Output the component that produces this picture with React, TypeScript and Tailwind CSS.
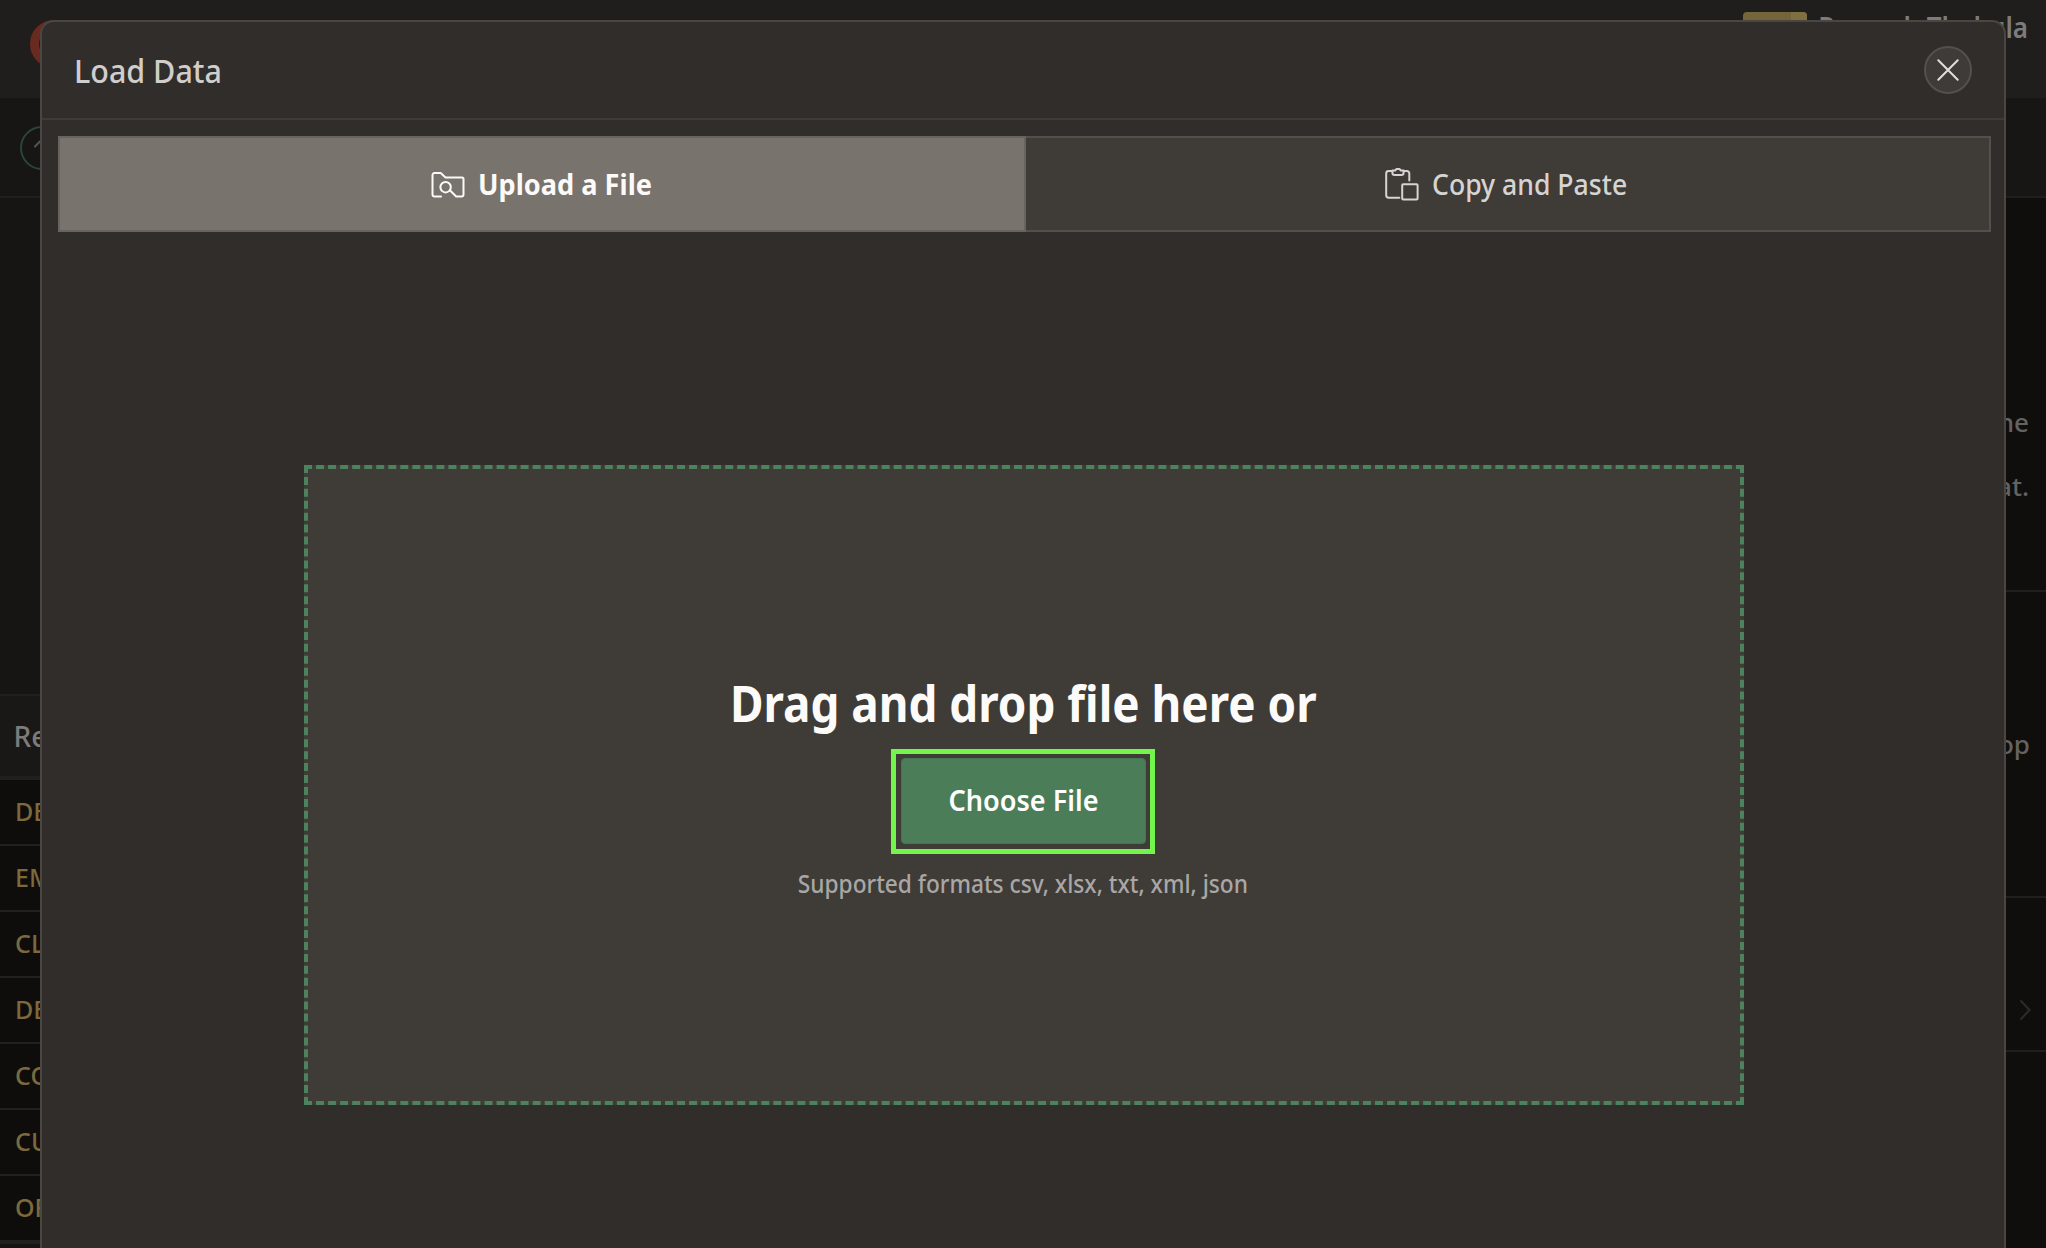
import React from "react";

const tables = ["DE", "EM", "CL", "DE", "CO", "CU", "OR"];

function FolderSearchIcon() {
  return (
    <svg className="mt-px h-[26px] w-[34px] shrink-0" viewBox="0 0 34 26" fill="none" stroke="#fbfaf9" strokeWidth="2" strokeLinecap="round" strokeLinejoin="round">
      <path d="M10 24.5H3.5a2 2 0 0 1-2-2V3a2 2 0 0 1 2-2h6.2l4.8 4.4H31a1.5 1.5 0 0 1 1.5 1.5V22.5a2 2 0 0 1-2 2h-5.3l-6.4-6.3" />
      <circle cx="14.6" cy="15.2" r="5.2" />
    </svg>
  );
}

function PasteIcon() {
  return (
    <svg className="h-[34px] w-[34px] shrink-0" viewBox="0 0 34 34" fill="none" stroke="#d6d4d2" strokeWidth="2" strokeLinecap="round" strokeLinejoin="round">
      <path d="M14.3 30.7H3.6A2.4 2.4 0 0 1 1.2 28.3V6.4A2.4 2.4 0 0 1 3.6 4H7" />
      <path d="M18.5 4h3.4a2.4 2.4 0 0 1 2.4 2.4v7.2" />
      <path d="M7.4 3.6h2.8L11.3 2h3.4l1.1 1.6h2.8v2.2a2.2 2.2 0 0 1-2.2 2.2H9.6a2.2 2.2 0 0 1-2.2-2.2z" />
      <rect x="17.2" y="17.2" width="15.4" height="15.4" rx="1" />
    </svg>
  );
}

function Backdrop() {
  return (
    <div className="flex h-full flex-col">
      <header className="flex h-[98px] shrink-0 justify-between bg-[#1f1e1c] pl-[30px] pr-[18px]">
        <div className="mt-5 h-12 w-[72px] rounded-full border-[9px] border-[#692a20]" />
        <div className="flex items-start">
          <div className="mt-3 flex h-10 w-16 overflow-hidden rounded bg-[#74663a]">
            <div className="ml-auto w-4 bg-[#7f7042]" />
          </div>
          <span className="flex w-[221px] origin-right scale-x-[0.93] justify-end whitespace-nowrap pt-[9px] text-[28px] font-semibold leading-9 text-[#7d7c7b]">
            Ramesh Thakula
          </span>
        </div>
      </header>
      <div className="flex h-[100px] shrink-0 items-center border-b-2 border-[#201f1d] bg-[#171614] pl-5 pt-0.5">
        <svg className="h-11 w-11" viewBox="0 0 44 44" fill="none" strokeWidth="2">
          <circle cx="22" cy="22" r="21" stroke="#284735" />
          <path d="M15 20.5l7-7 7 7" stroke="#555452" strokeLinecap="round" />
        </svg>
      </div>
      <div className="flex flex-1 justify-between">
        <aside className="flex w-14 flex-col bg-[#161513]">
          <div className="h-[496px] shrink-0 bg-[#161513]" />
          <div className="flex h-[86px] shrink-0 items-center border-b-4 border-t-2 border-[#201f1d] bg-[#191816] pl-[13.5px] text-[28px] font-medium text-[#7d7c7a]">
            Re
          </div>
          {tables.map((name, i) => (
            <div key={i} className="flex h-[66px] shrink-0 items-center border-b-2 border-[#22211f] bg-[#0e0d0b] pl-[15px] text-[25px] font-medium text-[#7c693c] last:h-[68px] last:border-b-4">
              {name}
            </div>
          ))}
        </aside>
        <aside className="flex w-[42px] flex-col bg-[#0f0e0c] text-[26px] font-medium leading-9 text-[#646361]">
          <div className="flex h-[394px] flex-col items-end border-b-2 border-[#201f1d] pr-[17px] pt-[206px]">
            <span>ne</span>
            <span className="mt-[28px]">at.</span>
          </div>
          <div className="flex h-[306px] flex-col items-end border-b-2 border-[#201f1d] pr-4 pt-[134px]">
            <span>op</span>
          </div>
          <div className="flex h-[154px] items-end justify-end border-b-2 border-[#201f1d] pb-[29px] pr-[15px]">
            <svg className="h-[22px] w-3" viewBox="0 0 12 22" fill="none" stroke="#2d2c2a" strokeWidth="2" strokeLinecap="round">
              <path d="M2 2l8.5 9L2 20" />
            </svg>
          </div>
        </aside>
      </div>
    </div>
  );
}

function Dialog() {
  return (
    <section
      role="dialog"
      className="absolute left-10 top-5 flex h-[1240px] w-[1966px] flex-col rounded-t-[14px] border-2 border-[#4b4642] bg-[#312d2a]"
    >
      <div className="flex h-[98px] shrink-0 items-center justify-between border-b-2 border-[#3f3b38] px-8">
        <h1 className="origin-left scale-x-[0.952] pt-0.5 text-[32px] font-medium leading-none text-[#d0cecc]">Load Data</h1>
        <button className="flex h-12 w-12 items-center justify-center rounded-full border-2 border-[#54504c] bg-[#3f3b38]">
          <svg className="h-[22px] w-[22px]" viewBox="0 0 22 22" stroke="#e0dedc" strokeWidth="2" strokeLinecap="round">
            <path d="M1.3 1.3l19.4 19.4M20.7 1.3L1.3 20.7" />
          </svg>
        </button>
      </div>
      <div className="ml-4 mt-4 flex h-24 w-[1933px] shrink-0">
        <button className="flex w-[968px] items-center justify-center gap-[13px] border-2 border-[#69635f] bg-[#79736e] pl-px text-[28px] font-bold text-[#fbfaf9]">
          <FolderSearchIcon />
          <span className="-mr-1 origin-left scale-x-[0.97]">Upload a File</span>
        </button>
        <button className="flex flex-1 items-center justify-center gap-[13px] border-2 border-l-0 border-[#54504c] bg-[#3f3b37] pl-[3px] text-[28px] font-medium text-[#d6d4d2]">
          <PasteIcon />
          <span className="-mr-1 origin-left scale-x-[0.95]">Copy and Paste</span>
        </button>
      </div>
      <div className="ml-[262px] mt-[233px] flex h-[640px] w-[1440px] shrink-0 flex-col items-center border-4 border-dashed border-[#4c825c] bg-[#3f3b37] pr-0.5 pt-[204px]">
        <h2 className="scale-x-[0.916] whitespace-nowrap text-[50px] font-bold leading-[60px] text-[#fcfbfa]">
          Drag and drop file here or
        </h2>
        <div className="mt-4 flex h-[105px] w-[264px] items-start justify-center border-[5px] border-[#73f54b] pl-px pt-[4px]">
          <button className="flex h-[86px] w-[245px] items-center justify-center rounded-[4px] border border-[#457552] bg-[#4a7d58] pb-0.5 text-[28px] font-semibold text-white">
            <span className="scale-x-[0.968]">Choose File</span>
          </button>
        </div>
        <p className="mt-3 scale-x-[0.908] whitespace-nowrap text-[25px] font-medium leading-[35px] text-[#a9a7a5]">
          Supported formats csv, xlsx, txt, xml, json
        </p>
      </div>
    </section>
  );
}

export default function App() {
  return (
    <main className="relative h-[1248px] w-[2046px] overflow-hidden bg-[#0f0e0c] font-['Noto_Sans',sans-serif]">
      <Backdrop />
      <Dialog />
    </main>
  );
}
